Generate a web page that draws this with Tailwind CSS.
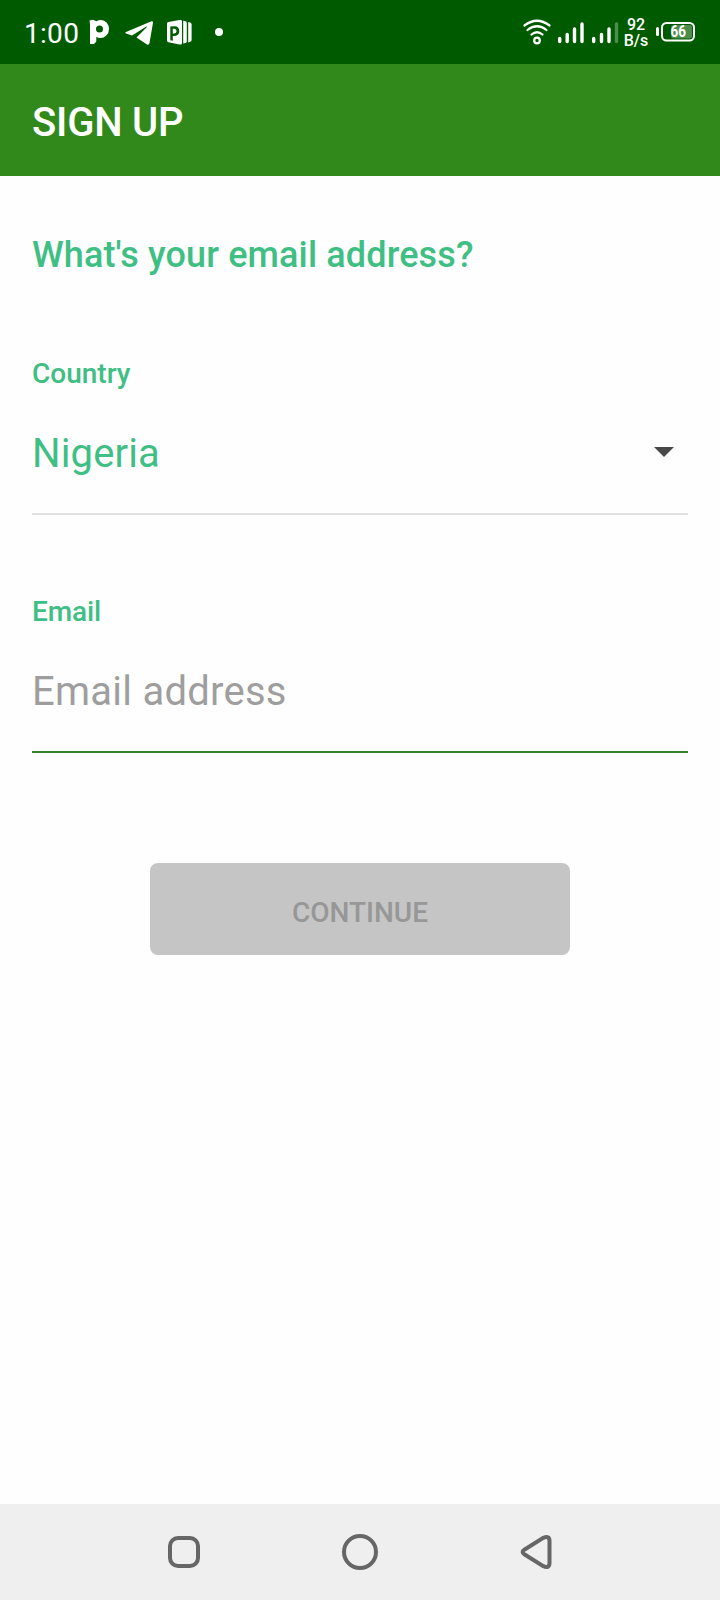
<!DOCTYPE html>
<html lang="en">

<head>
  <meta charset="UTF-8" />
  <meta name="viewport" content="width=device-width, initial-scale=1" />
  <title>Sign Up</title>
  <script src="https://cdn.jsdelivr.net/npm/@tailwindcss/browser@4"></script>
</head>

<body class="bg-[#fefefe] flex flex-col w-[720px] h-[1600px] overflow-hidden font-['Roboto',sans-serif]">

  <!-- Status bar -->
  <div class="h-16 bg-[#005b00] text-white flex justify-between">
    <div class="flex pl-6">
      <span class="w-[62px] pt-[18px] text-[28px] leading-8 tracking-[0.3px]">1:00</span>
      <!-- P app -->
      <svg class="w-6 h-16" viewBox="86 0 24 64" fill="currentColor">
        <path fill-rule="evenodd" d="M89.500 20.500L93 19.800L96.500 21.200Q98.500 20 101 20Q104.500 20 106.800 22.700Q109 25.300 109 29Q109 33 106.300 35.500Q103.800 38 100.500 38Q98.300 38 96.300 37V41.500L94 44H90V24ZM99.500 25.500A3.500 3.500 0 1 0 99.500 32.500A3.500 3.500 0 1 0 99.500 25.500Z" />
      </svg>
      <!-- Telegram -->
      <svg class="w-[30px] h-16 ml-[14px]" viewBox="124 0 30 64" fill="currentColor">
        <path d="M126 32L151.500 21.300Q153.300 20.800 153 22.800L149.500 43Q149 45.600 147 44.500L136.500 37.500L147.200 26.800Q147 26.300 146 26.800L132 35.500L126 33.500Q124.200 32.800 126 32Z" />
      </svg>
      <!-- Publisher style document -->
      <svg class="w-[25px] h-16 ml-[13px]" viewBox="167 0 25 64" fill="currentColor">
        <path fill-rule="evenodd" d="M168.500 22L179.500 20H180.800Q182 20 182 21.200V43.300Q182 44.500 180.800 44.500H179.500L168.500 42.300Q167 42 167 40.500V23.800Q167 22.300 168.500 22ZM170.300 26.500V40.300L172.800 40.800V36H174.500Q179.300 35.700 179.300 31Q179.100 26.300 174.500 26.300ZM172.800 28.800H174.300Q176.600 29 176.600 31.100Q176.500 33.300 174.300 33.400H172.800Z" />
        <path d="M183.200 20.800L185.500 21.300Q186.800 21.600 186.800 23V41.500Q186.800 42.800 185.500 43L183.200 43.500ZM188.200 21.900L190.200 22.400Q191.600 22.800 191.600 24.200V40Q191.600 41.400 190.200 41.800L188.200 42.400Z" />
      </svg>
      <svg class="w-2 h-16 ml-[23px]" viewBox="0 0 8 64" fill="currentColor">
        <circle cx="4" cy="32" r="4" />
      </svg>
    </div>

    <div class="flex pr-[25px]">
      <!-- Wifi -->
      <svg class="w-7 h-16" viewBox="523 0 28 64" fill="none" stroke="currentColor" stroke-width="2.200" stroke-linecap="round">
        <path d="M524.500 25.500Q537 16 549.500 25.500M527.500 30Q537 22.500 546.500 30M531.500 34.500Q537 30 542.500 34.500" />
        <circle cx="537" cy="40.500" r="2.800" />
      </svg>
      <!-- Sim 1 -->
      <svg class="w-[27px] h-16 ml-[7px]" viewBox="558 0 27 64" stroke="currentColor" stroke-width="3.400" stroke-linecap="round">
        <path d="M559.700 38.500V41.500M567.200 34.500V41.500M574.500 29V41.500M582 24V41.500" />
      </svg>
      <!-- Sim 2 -->
      <svg class="w-[27px] h-16 ml-[7px]" viewBox="592 0 27 64" stroke="currentColor" stroke-width="3.400" stroke-linecap="round">
        <path d="M593.700 38.500V41.500M601.500 34.500V41.500M609 29V41.500" />
        <path class="opacity-30" d="M616.500 24V41.500" />
      </svg>
      <div class="w-[26px] ml-1 pt-[17px] flex flex-col items-center text-base leading-4 font-medium">
        <span>92</span>
        <span>B/s</span>
      </div>
      <!-- Battery -->
      <svg class="w-[39px] h-16 ml-[7px]" viewBox="656 0 39 64">
        <rect x="656" y="27" width="3" height="9" rx="1.500" fill="#fff" />
        <rect x="662" y="23" width="32" height="17.500" rx="4.500" fill="none" stroke="#fff" stroke-width="2" />
        <rect x="671" y="25" width="21" height="13.500" rx="2.500" fill="#fff" opacity=".3" />
        <text x="678.200" y="37" text-anchor="middle" textLength="15.500" lengthAdjust="spacingAndGlyphs" font-size="16" font-weight="700" fill="#fff">66</text>
      </svg>
    </div>
  </div>

  <!-- App bar -->
  <header class="h-28 bg-[#31891b] px-8 pt-[35px]">
    <h1 class="text-[40px] leading-[48px] font-medium tracking-[-0.2px] text-white">SIGN UP</h1>
  </header>

  <!-- Form -->
  <main class="flex-1 px-8 pt-[57px] text-[#3fbf84]">
    <h2 class="text-[36px] leading-[44px] font-medium tracking-[0.13px]">What's your email address?</h2>

    <section class="mt-20 h-[158px] pt-px border-b-2 border-[#dedfdf]">
      <p class="text-[28px] leading-8 font-medium">Country</p>
      <div class="mt-10 flex justify-between text-[40px] leading-[48px] tracking-[0.15px]">
        <span>Nigeria</span>
        <svg class="w-5 h-[10px] mt-[17px] mr-[14px]" viewBox="0 0 20 10" fill="#484848">
          <path d="M0 0H20L10 10Z" />
        </svg>
      </div>
    </section>

    <section class="mt-20 h-[158px] pt-px border-b-2 border-[#38802f]">
      <p class="text-[28px] leading-8 font-medium tracking-[-0.1px]">Email</p>
      <p class="mt-10 text-[40px] leading-[48px] tracking-[0.25px] text-[#9e9e9e]">Email address</p>
    </section>

    <button class="block mx-auto mt-[110px] w-[420px] h-[92px] pt-[7px] rounded-lg bg-[#c5c5c5] text-[28px] leading-8 font-medium text-[#979797]">CONTINUE</button>
  </main>

  <!-- Navigation bar -->
  <nav class="h-24 bg-[#efefef] flex items-center pl-[168px] text-[#666]">
    <div class="size-8 rounded-[10px] border-4 border-current"></div>
    <div class="size-9 ml-[142px] rounded-full border-4 border-current"></div>
    <svg class="w-8 h-9 ml-[142px]" viewBox="520 1534 32 36" fill="none" stroke="currentColor" stroke-width="4">
      <path d="M524.300 1549.700L543.300 1537.800Q549.500 1535.300 549.500 1541V1563Q549.500 1568.700 543.300 1566.200L524.300 1554.300Q521 1552 524.300 1549.700Z" />
    </svg>
  </nav>

</body>

</html>
